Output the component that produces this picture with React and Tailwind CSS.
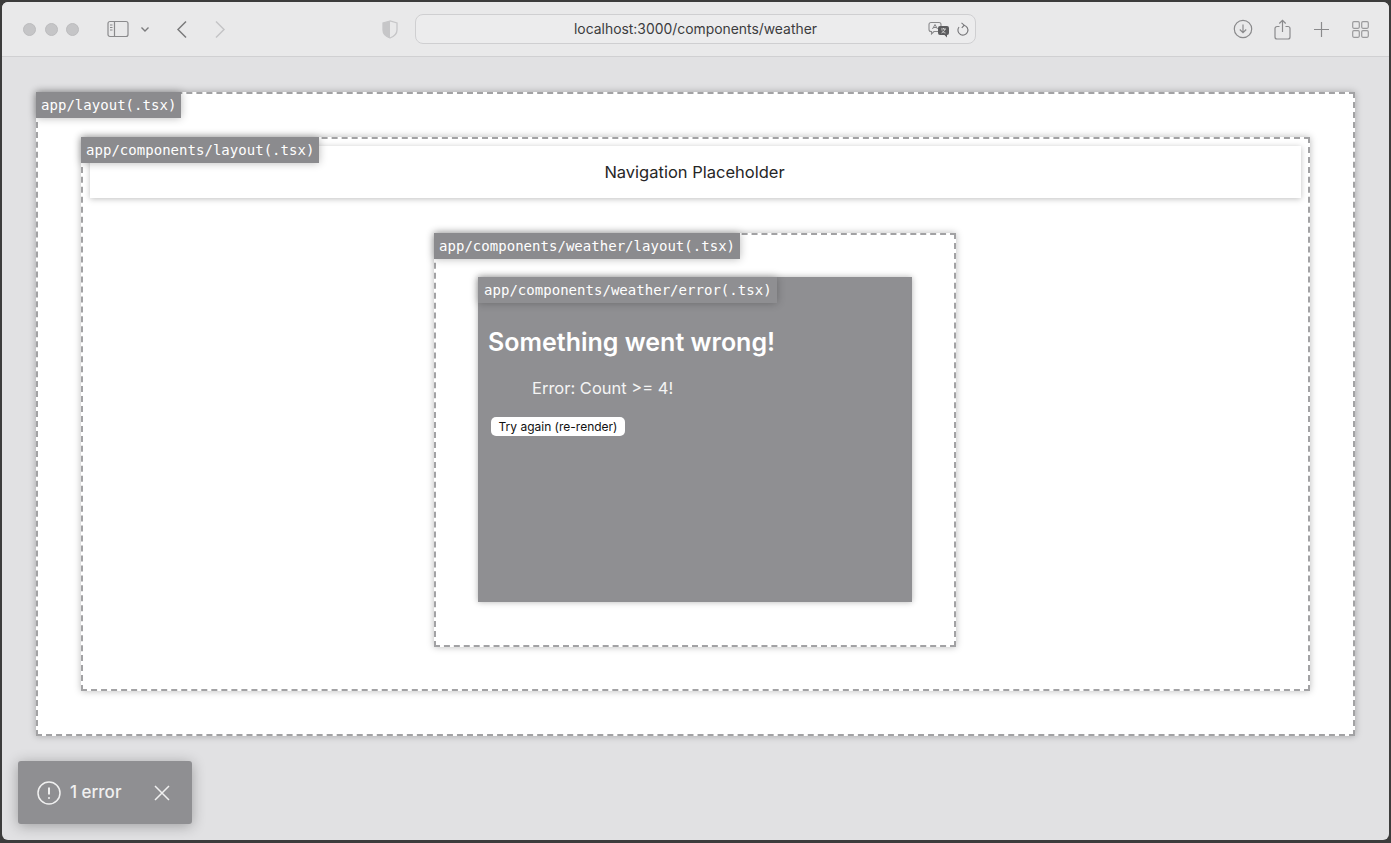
import React from "react";

const mono = "font-['DejaVu_Sans_Mono','Liberation_Mono',monospace]";

function Label({ children, className = "" }) {
  return (
    <div
      className={`absolute h-[26px] pr-[5px] text-white text-[14px] tracking-[0.03px] whitespace-nowrap shadow-[0_0_8px_rgba(0,0,0,0.28)] ${mono} ${className}`}
    >
      {children}
    </div>
  );
}

function Toolbar() {
  return (
    <div className="flex items-center h-[55px] shrink-0 bg-[#e9e9ea] border-b border-[#d0d0d2] text-[#8c8c8e]">
      <div className="flex items-center gap-[8.5px] ml-[21px]">
        <span className="w-[13px] h-[13px] rounded-full bg-[#c5c5c7] border border-[#bcbcbe]" />
        <span className="w-[13px] h-[13px] rounded-full bg-[#c5c5c7] border border-[#bcbcbe]" />
        <span className="w-[13px] h-[13px] rounded-full bg-[#c5c5c7] border border-[#bcbcbe]" />
      </div>
      <svg className="ml-[28px]" width="22" height="18" viewBox="0 0 22 18" fill="none" stroke="#8a8a8c" strokeWidth="1.2">
        <rect x="1" y="1.5" width="20" height="15" rx="2" />
        <path d="M7.5 1.5v15" />
        <path d="M3 5h2.5M3 7.5h2.5M3 10h2.5" strokeWidth="1" />
      </svg>
      <svg className="ml-[11px]" width="10" height="7" viewBox="0 0 10 7" fill="none" stroke="#7c7c7e" strokeWidth="1.4">
        <path d="M1.5 1.5 5 5l3.5-3.5" />
      </svg>
      <svg className="ml-[26px]" width="12" height="19" viewBox="0 0 12 19" fill="none" stroke="#7a7a7c" strokeWidth="1.5">
        <path d="M10 1.5 2 9.5l8 8" />
      </svg>
      <svg className="ml-[26px]" width="12" height="19" viewBox="0 0 12 19" fill="none" stroke="#c4c4c6" strokeWidth="1.5">
        <path d="M2 1.5l8 8-8 8" />
      </svg>
      <svg className="ml-[156px]" width="16" height="19" viewBox="0 0 16 19">
        <path d="M8 1 1 3v7c0 4 3 6.500 7 8 4-1.500 7-4 7-8V3z" fill="none" stroke="#c6c6c8" strokeWidth="1.300" />
        <path d="M8 1 1 3v7c0 4 3 6.500 7 8z" fill="#c6c6c8" />
      </svg>
      <div className="relative ml-[17px] w-[561px] h-[30px] rounded-[8px] border border-[#cfcfd1] bg-[#ececed] flex items-center justify-center shrink-0">
        <span className="text-[13.9px] text-[#3c3c3e] font-['Inter','Liberation_Sans',sans-serif]">localhost:3000/components/weather</span>
        <svg className="absolute right-[25px] top-[6px]" width="22" height="17" viewBox="0 0 22 17" fill="none">
          <path d="M3 1.500h8a2 2 0 0 1 2 2v5a2 2 0 0 1-2 2H6l-2.500 2.500V10.500H3a2 2 0 0 1-2-2v-5a2 2 0 0 1 2-2z" fill="#ececed" stroke="#8a8a8c" strokeWidth="1.100" />
          <path d="M4.500 8 7 3.500 9.500 8M5.500 6.500h3" stroke="#77777a" strokeWidth="0.900" />
          <path d="M12 5h7a2 2 0 0 1 2 2v5a2 2 0 0 1-2 2v2.500L16.500 14H12a2 2 0 0 1-2-2V7a2 2 0 0 1 2-2z" fill="#5c5c5e" />
          <path d="M13 8h5M15.500 7v1M17 8c-.5 2-2 3.500-3.500 4M14 9.500c.7 1.200 2 2.200 3.500 2.500" stroke="#e6e6e6" strokeWidth="0.800" />
        </svg>
        <svg className="absolute right-[6px] top-[7px]" width="13" height="15" viewBox="0 0 13 15" fill="none" stroke="#77777a" strokeWidth="1.100">
          <path d="M7.800 3.200A5 5 0 1 1 3 5" />
          <path d="M5.500 0.800 8.200 3.200 5.800 5.800" />
        </svg>
      </div>
      <svg className="ml-[257px]" width="20" height="20" viewBox="0 0 20 20" fill="none" stroke="#8a8a8c" strokeWidth="1.200">
        <circle cx="10" cy="10" r="8.700" />
        <path d="M10 5.500v8M6.800 10.500 10 13.700l3.200-3.200" />
      </svg>
      <svg className="ml-[21px]" width="17" height="21" viewBox="0 0 17 21" fill="none" stroke="#8a8a8c" strokeWidth="1.200">
        <path d="M5.500 7.500H3a2 2 0 0 0-2 2v8.500a2 2 0 0 0 2 2h11a2 2 0 0 0 2-2V9.500a2 2 0 0 0-2-2h-2.500" />
        <path d="M8.500 13V1.500M5.300 4.500l3.200-3.200 3.200 3.200" />
      </svg>
      <svg className="ml-[23px]" width="15" height="15" viewBox="0 0 15 15" fill="none" stroke="#8a8a8c" strokeWidth="1.200">
        <path d="M7.500 0v15M0 7.500h15" />
      </svg>
      <svg className="ml-[23px]" width="17" height="17" viewBox="0 0 17 17" fill="none" stroke="#9a9a9c" strokeWidth="1.200">
        <rect x="0.700" y="0.700" width="6.600" height="6.600" rx="1.200" />
        <rect x="9.700" y="0.700" width="6.600" height="6.600" rx="1.200" />
        <rect x="0.700" y="9.700" width="6.600" height="6.600" rx="1.200" />
        <rect x="9.700" y="9.700" width="6.600" height="6.600" rx="1.200" />
      </svg>
    </div>
  );
}

const dashed = "relative border-2 border-dashed border-[#a2a2a4] bg-white shadow-[0_0_7px_rgba(0,0,0,0.28)]";
const outerLabel = "-left-[2px] -top-[2px] pl-[5px] bg-[#8b8b8e] leading-[27px]";

export default function App() {
  return (
    <div className="relative h-[843px] w-[1391px] overflow-hidden bg-[#3c3c3c] pt-[2px] pl-[2px] pr-[2px] pb-[3px] font-['Inter','Liberation_Sans',sans-serif]">
      <div className="flex flex-col h-full rounded-[6px] overflow-hidden bg-[#e1e1e3]">
        <Toolbar />
        <div className="px-[34px] pt-[35px]">
          <div className={`${dashed} w-[1319px] h-[644px] px-[43px] pt-[43px]`}>
            <Label className={outerLabel}>app/layout(.tsx)</Label>
            <div className={`${dashed} w-[1229px] h-[554px] p-[7px]`}>
              <Label className={outerLabel}>app/components/layout(.tsx)</Label>
              <div className="h-[52px] bg-white flex items-center justify-center pr-[2px] text-[16.5px] text-[#262626] shadow-[0_1px_6px_rgba(0,0,0,0.25)]">
                Navigation Placeholder
              </div>
              <div className={`${dashed} ml-[344px] mt-[35px] w-[522px] h-[414px] p-[42px]`}>
                <Label className={outerLabel}>app/components/weather/layout(.tsx)</Label>
                <div className="relative h-[325px] bg-[#8f8f92] text-white pt-[50px] pl-[10px] shadow-[0_0_6px_rgba(0,0,0,0.3)]">
                  <Label className="left-0 top-0 pl-[6px] bg-[#8f8f92] leading-[26px] shadow-[0_0_8px_rgba(0,0,0,0.16)]">app/components/weather/error(.tsx)</Label>
                  <h2 className="text-[25px] leading-[30px] font-semibold">Something went wrong!</h2>
                  <p className="mt-[19px] ml-[44px] text-[16.5px] leading-[24px] text-[#f4f4f4]">Error: Count &gt;= 4!</p>
                  <button className="block mt-[17px] ml-[3px] w-[134px] h-[19px] rounded-[5px] bg-white text-[#111111] text-[12px] leading-[19px] text-center">
                    Try again (re-render)
                  </button>
                </div>
              </div>
            </div>
          </div>
        </div>
      </div>
      <div className="absolute left-[18px] top-[761px] w-[174px] h-[63px] rounded-[3px] bg-[#8f8f92] flex items-center pl-[19px] text-[#f0f0f0] shadow-[0_2px_14px_rgba(0,0,0,0.3)]">
        <svg width="24" height="24" viewBox="0 0 24 24" fill="none" stroke="#f0f0f0" strokeWidth="1.500">
          <circle cx="12" cy="12" r="11" />
          <path d="M12 6.500v7" strokeWidth="2" />
          <circle cx="12" cy="17" r="1" fill="#f0f0f0" stroke="none" />
        </svg>
        <span className="ml-[9px] pt-[1px] text-[17px] font-medium">1 error</span>
        <svg className="ml-[33px]" width="16" height="16" viewBox="0 0 16 16" fill="none" stroke="#f0f0f0" strokeWidth="1.500">
          <path d="M1 1l14 14M15 1 1 15" />
        </svg>
      </div>
    </div>
  );
}
